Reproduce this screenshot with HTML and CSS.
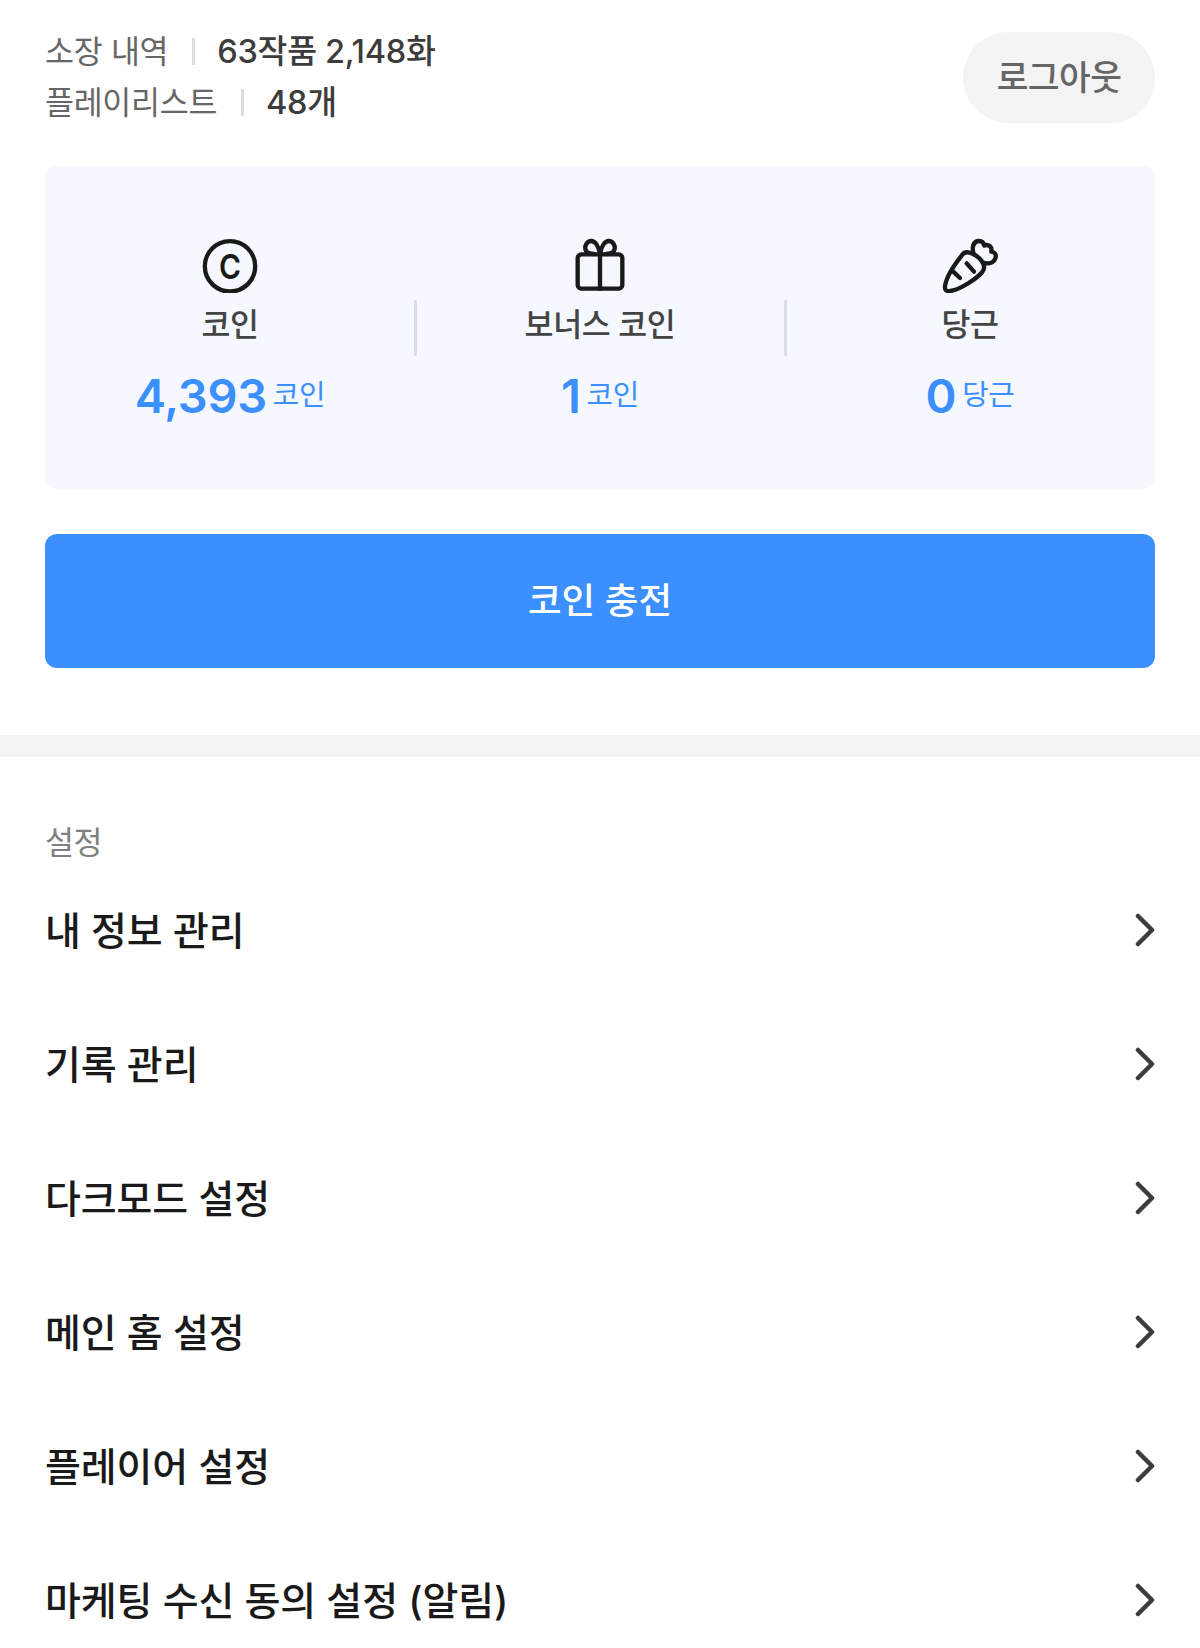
FILE: index.html
```html
<!DOCTYPE html>
<html lang="ko">
  <head>
    <meta charset="UTF-8" />
    <title>내 정보</title>
    <meta name="viewport" content="width=device-width, initial-scale=1.0" />
    <link rel="stylesheet" href="styles.css">
  </head>
  <body>
    <header class="profile">
      <div class="summary">
        <p class="summary-row">
          <span class="summary-label">소장 내역</span>
          <span class="bar"></span>
          <span class="summary-value">63작품 2,148화</span>
        </p>
        <p class="summary-row">
          <span class="summary-label">플레이리스트</span>
          <span class="bar"></span>
          <span class="summary-value">48개</span>
        </p>
      </div>
      <button class="logout" type="button">로그아웃</button>
    </header>

    <section class="wallet">
      <div class="wallet-item">
        <svg class="wallet-icon" viewBox="0 0 168 168">
          <circle cx="84" cy="88" r="75.5" />
          <text class="coin-letter" x="84" y="125" textLength="66" lengthAdjust="spacingAndGlyphs">C</text>
        </svg>
        <span class="wallet-name">코인</span>
        <p class="wallet-amount"><strong>4,393</strong><span>코인</span></p>
      </div>
      <div class="wallet-item">
        <svg class="wallet-icon" viewBox="0 0 168 168">
          <rect x="17" y="52" width="134" height="103" rx="11" />
          <path d="M84 52V155" />
          <path d="M84 50C80 28 70 12 58 12C43 12 36 30 42 41C46 49 55 50 66 51" />
          <path d="M84 50C88 28 98 12 110 12C125 12 132 30 126 41C122 49 113 50 102 51" />
        </svg>
        <span class="wallet-name">보너스 코인</span>
        <p class="wallet-amount"><strong>1</strong><span>코인</span></p>
      </div>
      <div class="wallet-item">
        <svg class="wallet-icon" viewBox="0 0 168 168">
          <path d="M59 56C65 46 73 44 83 47C96 51 111 61 119 72C127 83 129 95 121 105C105 124 57 157 25 162C12 164 8 158 9 148C13 118 39 81 59 56Z" />
          <path d="M95 51C89 33 93 14 109 12C119 11 125 18 127 26C139 20 151 29 148 44C159 45 164 54 160 64C154 79 138 82 123 77" />
          <path d="M33 103L54 123" />
          <path d="M74 79L96 104" />
        </svg>
        <span class="wallet-name">당근</span>
        <p class="wallet-amount"><strong>0</strong><span>당근</span></p>
      </div>
    </section>

    <button class="charge" type="button">코인 충전</button>

    <section class="settings">
      <h2>설정</h2>
      <ul class="menu">
        <li>
          <span>내 정보 관리</span>
          <svg class="arrow" viewBox="0 0 20 34"><path d="M3 3L17 17L3 31" /></svg>
        </li>
        <li>
          <span>기록 관리</span>
          <svg class="arrow" viewBox="0 0 20 34"><path d="M3 3L17 17L3 31" /></svg>
        </li>
        <li>
          <span>다크모드 설정</span>
          <svg class="arrow" viewBox="0 0 20 34"><path d="M3 3L17 17L3 31" /></svg>
        </li>
        <li>
          <span>메인 홈 설정</span>
          <svg class="arrow" viewBox="0 0 20 34"><path d="M3 3L17 17L3 31" /></svg>
        </li>
        <li>
          <span>플레이어 설정</span>
          <svg class="arrow" viewBox="0 0 20 34"><path d="M3 3L17 17L3 31" /></svg>
        </li>
        <li>
          <span>마케팅 수신 동의 설정 (알림)</span>
          <svg class="arrow" viewBox="0 0 20 34"><path d="M3 3L17 17L3 31" /></svg>
        </li>
      </ul>
    </section>
  </body>
</html>
```

FILE: styles.css
```css
* {
  box-sizing: border-box;
}

body {
  margin: 0;
  height: 1648px;
  overflow: hidden;
  background: #fff;
  color: #1a1a1a;
  font-family: Inter, "Noto Sans CJK KR", sans-serif;
  font-size: 31.5px;
}

p,
h2,
ul {
  margin: 0;
  padding: 0;
}

button {
  border: none;
  padding: 0;
  font-family: inherit;
  cursor: pointer;
}

.profile {
  display: flex;
  justify-content: space-between;
  align-items: flex-start;
  padding: 26px 45px 0;
  height: 166px;
}

.summary-row {
  display: flex;
  align-items: center;
  height: 51px;
  line-height: 51px;
}

.summary-label {
  color: #666;
  letter-spacing: -0.3px;
}

.summary-value {
  color: #3c3c3c;
  font-size: 32.5px;
  font-weight: 500;
  letter-spacing: -0.3px;
}

.bar {
  width: 3px;
  height: 27px;
  margin: 0 22px 0 24px;
  background: #ddd;
}

.logout {
  width: 192px;
  height: 91px;
  margin-top: 6px;
  padding-bottom: 5px;
  border-radius: 46px;
  background: #f4f4f4;
  color: #666;
  font-size: 34.5px;
  font-weight: 500;
  letter-spacing: -0.6px;
}

.wallet {
  display: flex;
  height: 323px;
  margin: 0 45px;
  padding-top: 71px;
  border-radius: 12px;
  background: #f5f8ff;
}

.wallet-item {
  position: relative;
  flex: 1;
  display: flex;
  flex-direction: column;
  align-items: center;
}

.wallet-item + .wallet-item::before {
  content: "";
  position: absolute;
  left: -1px;
  top: 63px;
  width: 3px;
  height: 56px;
  background: #d9deea;
}

.wallet-icon {
  width: 56px;
  height: 56px;
  fill: none;
  stroke: #1a1a1a;
  stroke-width: 13;
  stroke-linecap: round;
  stroke-linejoin: round;
}

.coin-letter {
  fill: #1a1a1a;
  stroke: none;
  font-size: 103px;
  font-weight: 600;
  text-anchor: middle;
}

.wallet-name {
  margin-top: 7px;
  line-height: 50px;
  color: #444;
  font-weight: 500;
  letter-spacing: -0.4px;
}

.wallet-amount {
  display: flex;
  align-items: center;
  gap: 6px;
  margin-top: 16px;
  height: 60px;
  line-height: 60px;
  color: #3b8fff;
}

.wallet-amount strong {
  font-size: 47px;
  font-weight: 600;
  letter-spacing: -0.3px;
}

.wallet-amount span {
  padding-bottom: 2px;
  font-size: 28.8px;
  letter-spacing: -0.3px;
}

.charge {
  display: block;
  width: 1110px;
  height: 134px;
  margin: 45px 45px 67px;
  padding-bottom: 5px;
  border-radius: 12px;
  background: #3b8fff;
  color: #fff;
  font-size: 36.5px;
  font-weight: 500;
}

.settings {
  padding: 61px 45px 0;
  border-top: 22px solid #f4f4f4;
}

.settings h2 {
  height: 45px;
  line-height: 50px;
  color: #808080;
  font-size: 31.5px;
  font-weight: 400;
  letter-spacing: -0.4px;
}

.menu {
  list-style: none;
}

.menu li {
  display: flex;
  align-items: center;
  justify-content: space-between;
  height: 134px;
  font-size: 39px;
  font-weight: 500;
  letter-spacing: -0.1px;
}

.menu li span {
  padding-bottom: 4px;
}

.arrow {
  width: 20px;
  height: 34px;
  fill: none;
  stroke: #3c3c3c;
  stroke-width: 4.5;
  stroke-linecap: round;
  stroke-linejoin: round;
}
```
